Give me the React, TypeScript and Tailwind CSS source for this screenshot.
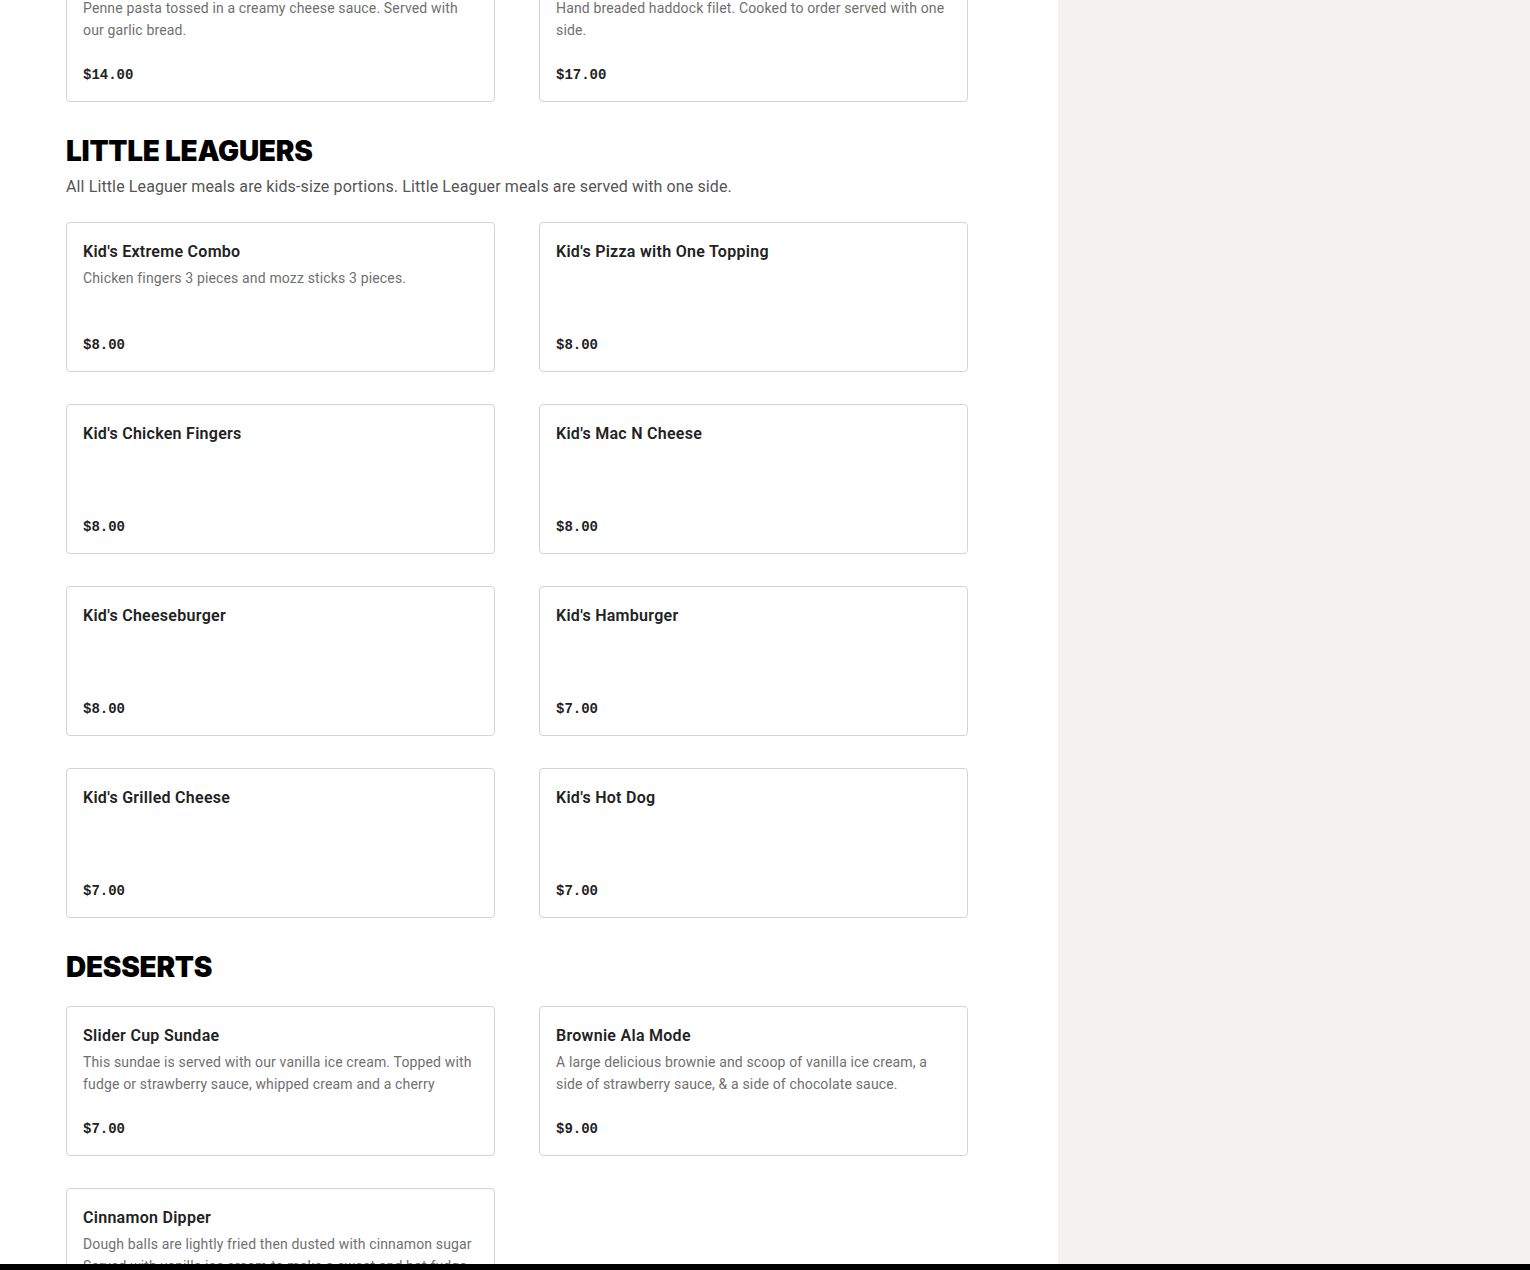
import React from "react";

type Item = { name: string; desc?: string; price: string };

const topRow: Item[] = [
  { name: "Mac N Cheese", desc: "Penne pasta tossed in a creamy cheese sauce. Served with our garlic bread.", price: "$14.00" },
  { name: "Fish & Chips", desc: "Hand breaded haddock filet. Cooked to order served with one side.", price: "$17.00" },
];

const kids: Item[] = [
  { name: "Kid's Extreme Combo", desc: "Chicken fingers 3 pieces and mozz sticks 3 pieces.", price: "$8.00" },
  { name: "Kid's Pizza with One Topping", price: "$8.00" },
  { name: "Kid's Chicken Fingers", price: "$8.00" },
  { name: "Kid's Mac N Cheese", price: "$8.00" },
  { name: "Kid's Cheeseburger", price: "$8.00" },
  { name: "Kid's Hamburger", price: "$7.00" },
  { name: "Kid's Grilled Cheese", price: "$7.00" },
  { name: "Kid's Hot Dog", price: "$7.00" },
];

const desserts: Item[] = [
  { name: "Slider Cup Sundae", desc: "This sundae is served with our vanilla ice cream. Topped with fudge or strawberry sauce, whipped cream and a cherry", price: "$7.00" },
  { name: "Brownie Ala Mode", desc: "A large delicious brownie and scoop of vanilla ice cream, a side of strawberry sauce, & a side of chocolate sauce.", price: "$9.00" },
  { name: "Cinnamon Dipper", desc: "Dough balls are lightly fried then dusted with cinnamon sugar Served with vanilla ice cream to make a sweet and hot fudge treat.", price: "$7.00" },
];

const body = { fontFamily: "Roboto, 'Liberation Sans', sans-serif" };

function Card({ item }: { item: Item }) {
  return (
    <div className="rounded-[4px] border border-[#d4d4d4] bg-white px-4 pt-4 pb-4">
      <div className="pt-px text-[16px] font-semibold leading-6 tracking-[0.28px] text-[#222]" style={body}>
        {item.name}
      </div>
      <div className="mt-[3px] min-h-[44px] text-[14px] leading-[22px] tracking-[0.15px] text-[#707070]" style={body}>
        {item.desc}
      </div>
      <div
        className="mt-[24px] text-[14px] font-bold leading-5 text-[#222]"
        style={{ fontFamily: "'Liberation Mono', 'DejaVu Sans Mono', monospace" }}
      >
        {item.price}
      </div>
    </div>
  );
}

function Grid({ items }: { items: Item[] }) {
  return (
    <div className="grid w-[902px] grid-cols-[429px_429px] gap-x-[44px] gap-y-[32px]">
      {items.map((it) => (
        <Card key={it.name} item={it} />
      ))}
    </div>
  );
}

const heading = { fontFamily: "Inter, 'Liberation Sans', sans-serif" };

export default function App() {
  return (
    <div className="relative flex h-[1270px] w-full overflow-hidden bg-white">
      <div className="w-[1058px] shrink-0 pl-[66px]">
        <div className="-mt-[48px]">
          <Grid items={topRow} />
          <h2 className="mt-[31px] text-[28px] font-black uppercase leading-9 tracking-[-0.01em] text-black" style={heading}>
            Little Leaguers
          </h2>
          <p className="mt-[6px] mb-[23px] text-[16px] leading-6 tracking-[0.12px] text-[#555]" style={body}>
            All Little Leaguer meals are kids-size portions. Little Leaguer meals are served with one side.
          </p>
          <Grid items={kids} />
          <h2 className="mt-[31px] mb-[21px] text-[28px] font-black uppercase leading-9 tracking-[-0.01em] text-black" style={heading}>
            Desserts
          </h2>
          <Grid items={desserts} />
        </div>
      </div>
      <div className="flex-1 bg-[#f3f2ef]" />
      <div className="absolute bottom-0 left-0 right-0 h-[6px] bg-black" />
    </div>
  );
}
